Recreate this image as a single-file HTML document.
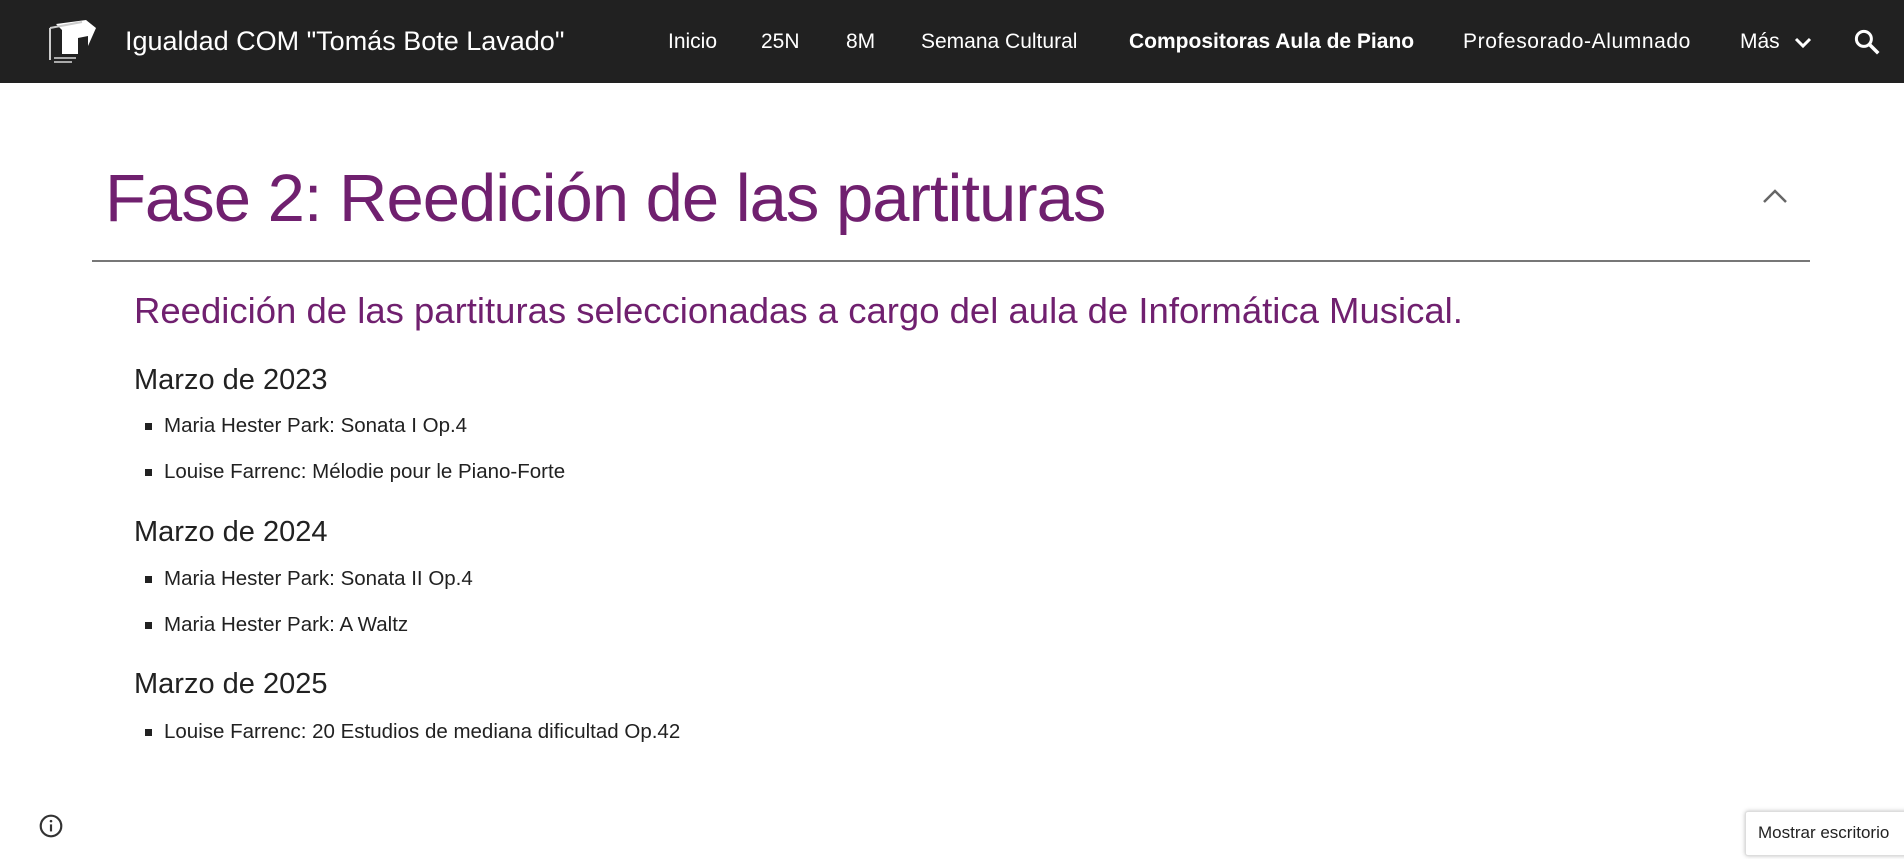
<!DOCTYPE html>
<html><head><meta charset="utf-8"><style>
*{margin:0;padding:0;box-sizing:border-box}
body{width:1904px;height:859px;background:#fff;font-family:"Liberation Sans",sans-serif;position:relative;overflow:hidden}
.hdr{position:absolute;left:0;top:0;width:1904px;height:83px;background:#212121}
.t{position:absolute;white-space:nowrap}
.nav{color:#fff;font-size:21px;top:30px}
.p{color:#70206f}
.li{font-size:20.5px;color:#212121;left:164px}
.b{position:absolute;left:145px;width:7px;height:7px;background:#212121}
.yr{font-size:29px;color:#212121;left:134px}
</style></head><body>
<div class="hdr">
<svg style="position:absolute;left:42px;top:16px" width="56" height="48" viewBox="0 0 56 48">
<path d="M14 8 L44 4 L54 12 L46 30 L46 20 L36 22 L36 38 L20 38 L20 14 Z" fill="#fff"/>
<path d="M8 12 L8 44 M8 12 L40 6" stroke="#ccc" stroke-width="2" fill="none"/>
<path d="M12 42 H34 M12 46 H30" stroke="#aaa" stroke-width="2"/>
</svg>
<div class="t" style="left:125px;top:26px;color:#fff;font-size:27px">Igualdad COM "Tomás Bote Lavado"</div>
<div class="t nav" style="left:668px">Inicio</div>
<div class="t nav" style="left:761px">25N</div>
<div class="t nav" style="left:846px">8M</div>
<div class="t nav" style="left:921px">Semana Cultural</div>
<div class="t nav" style="left:1129px;font-weight:bold">Compositoras Aula de Piano</div>
<div class="t nav" style="left:1463px;letter-spacing:0.6px">Profesorado-Alumnado</div>
<div class="t nav" style="left:1740px">Más</div>
<svg style="position:absolute;left:1793px;top:35px" width="20" height="16" viewBox="0 0 20 16"><path d="M3 4 L10 11 L17 4" stroke="#fff" stroke-width="3" fill="none"/></svg>
<svg style="position:absolute;left:1852px;top:27px" width="30" height="30" viewBox="0 0 24 24"><circle cx="9.5" cy="9.5" r="6" stroke="#fff" stroke-width="2.4" fill="none"/><path d="M14 14 L21 21" stroke="#fff" stroke-width="2.8"/></svg>
</div>
<div class="t p" style="left:105px;top:160px;font-size:67px;letter-spacing:-1px">Fase 2: Reedición de las partituras</div>
<svg style="position:absolute;left:1760px;top:186px" width="30" height="20" viewBox="0 0 30 20"><path d="M4 16 L15 5 L26 16" stroke="#666" stroke-width="2.5" fill="none"/></svg>
<div style="position:absolute;left:92px;top:260px;width:1718px;height:2px;background:#777"></div>
<div class="t p" style="left:134px;top:290px;font-size:36.5px">Reedición de las partituras seleccionadas a cargo del aula de Informática Musical.</div>
<div class="t yr" style="top:364px">Marzo de 2023</div>
<div class="b" style="top:423px"></div><div class="t li" style="top:414px">Maria Hester Park: Sonata I Op.4</div>
<div class="b" style="top:469px"></div><div class="t li" style="top:460px">Louise Farrenc: Mélodie pour le Piano-Forte</div>
<div class="t yr" style="top:516px">Marzo de 2024</div>
<div class="b" style="top:576px"></div><div class="t li" style="top:567px">Maria Hester Park: Sonata II Op.4</div>
<div class="b" style="top:622px"></div><div class="t li" style="top:613px">Maria Hester Park: A Waltz</div>
<div class="t yr" style="top:668px">Marzo de 2025</div>
<div class="b" style="top:729px"></div><div class="t li" style="top:720px">Louise Farrenc: 20 Estudios de mediana dificultad Op.42</div>
<svg style="position:absolute;left:38px;top:813px" width="26" height="26" viewBox="0 0 24 24"><circle cx="12" cy="12" r="9.5" stroke="#333" stroke-width="2" fill="none"/><path d="M12 10.5 V17" stroke="#333" stroke-width="2"/><circle cx="12" cy="7.5" r="1.2" fill="#333"/></svg>
<div style="position:absolute;left:1745px;top:811px;width:170px;height:45px;background:#fff;border:1px solid #ddd;box-shadow:0 0 4px rgba(0,0,0,.25);border-radius:3px"></div>
<div class="t" style="left:1758px;top:823px;font-size:17px;color:#222">Mostrar escritorio</div>
</body></html>
